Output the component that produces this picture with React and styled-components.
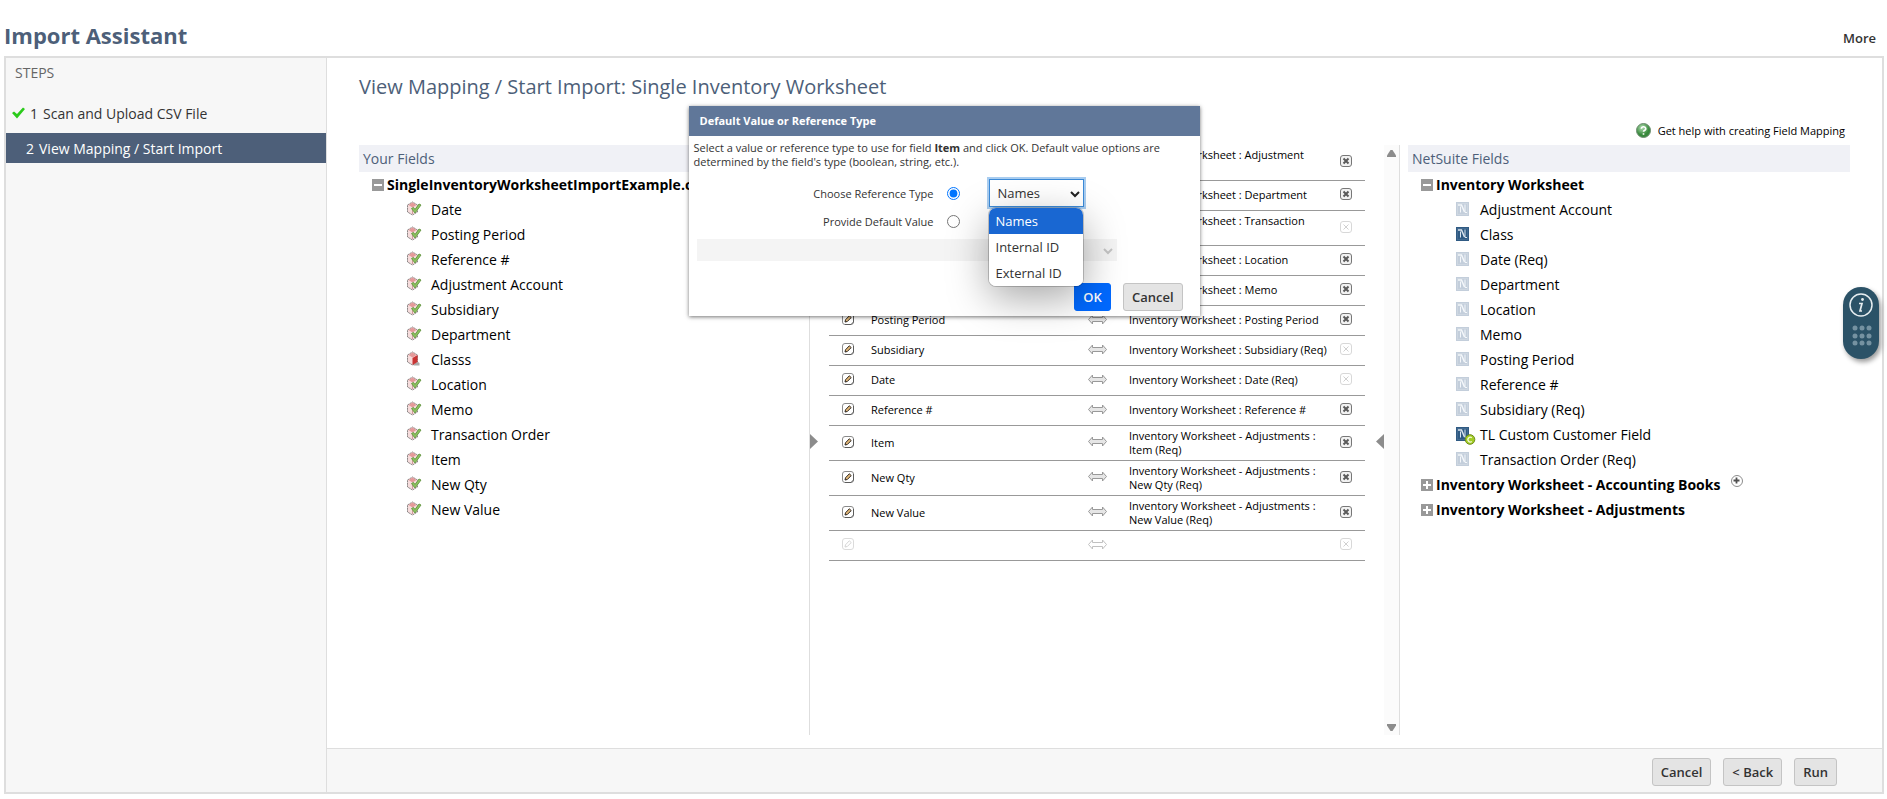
import React, { useState, useId } from "react";
import styled, { createGlobalStyle, css } from "styled-components";

const slate = "#4d5f79";
const rule = "#dedede";

const GlobalStyle = createGlobalStyle`
  * { box-sizing: border-box; }
  body {
    margin: 0;
    background: #fff;
    color: #000;
    font-family: "Open Sans", "Noto Sans", sans-serif;
    font-size: 14px;
  }
  button, select, input { font-family: inherit; }
  ul, ol { list-style: none; margin: 0; padding: 0; }
  svg { display: block; }
`;

const Page = styled.div`
  position: relative;
  min-height: 100vh;
  display: flex;
  flex-direction: column;
  padding: 16px 3px 5px 4px;
`;

const TitleBar = styled.header`
  display: flex;
  justify-content: space-between;
  align-items: flex-start;
  height: 40px;
  padding-right: 8px;
`;

const PageTitle = styled.h1`
  margin: 0;
  font-size: 22px;
  line-height: 38px;
  font-weight: 700;
  color: ${slate};
`;

const MoreLink = styled.a`
  font-size: 13px;
  line-height: 44px;
  font-weight: 600;
  color: #333;
  text-decoration: none;
`;

const Frame = styled.div`
  flex: 1;
  display: flex;
  border: 2px solid ${rule};
`;

const Sidebar = styled.nav`
  flex: 0 0 321px;
  background: #f7f7f7;
  border-right: 1px solid ${rule};
`;

const StepsLabel = styled.h2`
  margin: 0;
  padding: 0 9px;
  font-size: 14px;
  line-height: 30px;
  font-weight: 400;
  color: #666;
`;

const Step = styled.li`
  display: flex;
  align-items: center;
  gap: 5px;
  height: 30px;
  padding-left: ${(p) => (p.$active ? 20 : 6)}px;
  color: ${(p) => (p.$active ? "#fff" : "#333")};
  background: ${(p) => (p.$active ? slate : "transparent")};
`;

const StepList = styled.ol`
  display: grid;
  gap: 5px;
  padding-top: 10px;
`;

const StepNumber = styled.span`
  width: 8px;
`;

const Main = styled.main`
  flex: 1;
  min-width: 0;
  display: flex;
  flex-direction: column;
`;

const Content = styled.section`
  flex: 1;
  display: flex;
  flex-direction: column;
  padding: 12px 32px 13px;
`;

const Heading = styled.h2`
  margin: 0;
  font-size: 20px;
  line-height: 34px;
  font-weight: 400;
  color: ${slate};
`;

const HelpLink = styled.a`
  align-self: flex-end;
  display: flex;
  align-items: center;
  gap: 7px;
  margin: 18px 5px 6px 0;
  font-size: 11px;
  line-height: 17px;
  color: #000;
  text-decoration: none;
`;

const Columns = styled.div`
  flex: 1;
  display: grid;
  grid-template-columns: 451fr 574fr 16px 8px 442fr;
`;

const TreePane = styled.div`
  border-right: ${(p) => (p.$divided ? `1px solid ${rule}` : "0")};
`;

const PaneHeader = styled.h3`
  margin: 0;
  padding: 0 4px;
  font-size: 14px;
  line-height: 27px;
  font-weight: 400;
  color: ${slate};
  background: #f0f1f6;
`;

const Group = styled.li`
  padding-left: 13px;
`;

const GroupLabel = styled.div`
  display: flex;
  align-items: center;
  gap: 3px;
  height: 25px;
  font-weight: 700;
  white-space: nowrap;
`;

const Toggle = styled.button`
  display: block;
  width: 12px;
  height: 12px;
  padding: 0;
  border: 0;
  background: none;
`;

const AddLine = styled(Toggle)`
  margin: 0 0 7px 8px;
`;

const Field = styled.li`
  display: flex;
  align-items: center;
  gap: 8px;
  height: 25px;
  padding-left: 35px;
`;

const FieldIcon = styled.span`
  display: block;
  width: 16px;
  height: 16px;
  margin-bottom: 2px;
`;

const MappingPane = styled.div`
  display: flex;
  align-items: flex-start;
`;

const Collapser = styled.button`
  align-self: center;
  flex: 0 0 8px;
  margin-top: 3px;
  padding: 0;
  border: 0;
  background: none;
`;

const MappingTable = styled.table`
  flex: 1;
  margin: 0 11px;
  border-collapse: collapse;
  table-layout: fixed;
  font-size: 11px;
  line-height: 14px;
`;

const Col = styled.col`
  width: ${(p) => p.$w};
`;

const MapRow = styled.tr`
  height: ${(p) => (p.$tall ? 35 : 30)}px;
  border-bottom: 1px solid #999;
`;

const Cell = styled.td`
  padding: 0;
  vertical-align: middle;
  white-space: nowrap;
`;

const IconButton = styled.button`
  display: block;
  width: 12px;
  height: 12px;
  margin: 0 13px 2px;
  padding: 0;
  border: 0;
  background: none;
`;

const ArrowBox = styled.span`
  display: block;
  margin-bottom: 2px;
`;

const ScrollTrack = styled.div`
  display: flex;
  flex-direction: column;
  justify-content: space-between;
  align-items: center;
  padding: 5px 0 4px;
  background: #fbfbfb;
  border-right: 1px solid ${rule};
`;

const Footer = styled.footer`
  display: flex;
  justify-content: flex-end;
  align-items: center;
  gap: 12px;
  height: 44px;
  padding: 3px 45px 0 0;
  background: #f7f7f7;
  border-top: 1px solid ${rule};
`;

const Button = styled.button`
  height: 28px;
  padding: 0 8px;
  font-size: 13px;
  line-height: 18px;
  font-weight: 600;
  border-radius: 3px;
  white-space: nowrap;
  ${(p) =>
    p.$primary
      ? css`
          color: #fff;
          background: #0069ff;
          border: 1px solid #0069ff;
        `
      : css`
          color: #333;
          background: #e4e4e4;
          border: 1px solid #c4c4c4;
        `}
`;

const HelpPill = styled.aside`
  position: absolute;
  top: 287px;
  right: 8px;
  width: 36px;
  height: 72px;
  border-radius: 18px;
  background: #2b5267;
  box-shadow: 2px 3px 5px rgba(0, 0, 0, 0.4);
`;

const Dialog = styled.form`
  position: absolute;
  top: 106px;
  left: 50%;
  margin-left: -255px;
  width: 511px;
  background: #fff;
  box-shadow: 0 1px 4px rgba(0, 0, 0, 0.55);
`;

const DialogTitle = styled.h2`
  margin: 0;
  padding: 0 11px;
  font-size: 11px;
  line-height: 30px;
  font-weight: 700;
  color: #fff;
  background: #607799;
`;

const DialogBody = styled.div`
  padding: 5px 17px 5px 8px;
  font-size: 11px;
  color: #333;
`;

const Intro = styled.p`
  margin: 0 0 0 -3px;
  line-height: 14px;
`;

const Choice = styled.div`
  position: relative;
  display: grid;
  grid-template-columns: 237px 13px 95px;
  align-items: center;
  gap: 0 13px;
  height: 28px;
  margin-top: ${(p) => (p.$first ? 10 : 0)}px;
`;

const ChoiceLabel = styled.label`
  text-align: right;
`;

const Radio = styled.input`
  width: 13px;
  height: 13px;
  margin: 0;
  accent-color: #0075ff;
`;

const selectBox = css`
  appearance: none;
  font-size: 13px;
  border-radius: 0;
  background-repeat: no-repeat;
`;

const SelectWrap = styled.span`
  position: relative;
  display: block;
  width: ${(p) => p.$w}px;
  margin-top: ${(p) => p.$drop || 0}px;
  margin-left: ${(p) => p.$inset || 0}px;
`;

const TypeSelect = styled.select`
  ${selectBox}
  display: block;
  width: 100%;
  height: 28px;
  padding: 0 8px;
  color: #333;
  background: #fff;
  border: 1px solid #3b8ad8;
  outline: 2px solid #a9cdf0;
`;

const ValueSelect = styled.select`
  ${selectBox}
  display: block;
  width: 100%;
  height: 22px;
  border: 0;
  background: #f0f0f0;
`;

const Chevron = styled.svg`
  position: absolute;
  top: 50%;
  right: ${(p) => p.$right}px;
  margin-top: -2px;
  pointer-events: none;
`;

const Options = styled.ul`
  position: absolute;
  z-index: 1;
  top: 29px;
  left: 0;
  width: 94px;
  overflow: hidden;
  border-radius: 7px;
  background: #fff;
  font-size: 13px;
  box-shadow: 0 0 0 1px rgba(0, 0, 0, 0.2), 0 12px 40px rgba(0, 0, 0, 0.35);
`;

const Option = styled.li`
  padding: 0 7px;
  line-height: 26px;
  color: ${(p) => (p.$selected ? "#fff" : "#333")};
  background: ${(p) => (p.$selected ? "#1967d2" : "#fff")};
`;

const DialogActions = styled.div`
  display: flex;
  justify-content: flex-end;
  gap: 12px;
  margin-top: 22px;
`;

const CheckMark = () => (
  <svg width="13" height="12" viewBox="0 0 13 12" aria-hidden="true">
    <path d="M0 6l2-1.500 3 2.500L11 0.500l2 1.500-8 9.500z" fill="#2bcb1b" />
  </svg>
);

const ToggleGlyph = ({ open }) => (
  <svg width="12" height="12" viewBox="0 0 12 12" shapeRendering="crispEdges">
    <rect width="12" height="12" rx="1" fill="#999" />
    <rect x="2" y="5" width="8" height="2" fill="#fff" />
    {!open && <rect x="5" y="2" width="2" height="8" fill="#fff" />}
  </svg>
);

const CsvGlyph = ({ mapped }) => (
  <svg width="16" height="16" viewBox="0 0 16 16" aria-hidden="true">
    {!mapped && <path d="M6 14l5-3 1.500 1v2.500H7z" fill="#aaa" />}
    <path d="M0.500 4L5.500 1 10.500 4V11L5.500 14 0.500 11z" fill="#f6dcdc" stroke="#8b8686" strokeDasharray="2 0.500" />
    <path d="M1.500 4L5.500 1.500 9.500 4 5.500 6.500z" fill="#e59a9a" />
    {mapped ? (
      <>
        <path d="M5.500 7V13" stroke="#cf9a9a" />
        <path d="M4.500 7.500l2-1 1.500 2L12 3l2 1-6 8z" fill="#8cc45c" stroke="#6b9b4b" strokeLinejoin="round" />
      </>
    ) : (
      <path d="M5.500 7L10.500 4V11L5.500 14z" fill="#c93333" />
    )}
  </svg>
);

const NsGlyph = ({ kind }) => {
  const muted = kind === "used";
  const ink = muted ? "#f4f7fa" : "#dbe5ee";
  return (
    <svg width="20" height="19" viewBox="0 0 20 19" aria-hidden="true">
      <rect y="1" width="13" height="14" fill={muted ? "#c3cedb" : "#2f5a83"} />
      <rect x="1.500" y="2.500" width="10" height="11" fill="none" stroke={muted ? "#ced7e1" : "#426a90"} />
      <path d="M2 4H5.500L8.500 11" fill="none" stroke={ink} strokeWidth="1.500" />
      <path d="M4.500 5.500V11.500M9 3.500V11.500H11" fill="none" stroke={ink} />
      {kind === "custom" && (
        <>
          <circle cx="14" cy="13.500" r="4.800" fill="#a3cc25" stroke="#6e8d1b" />
          <path d="M15.800 11.700a2.400 2.400 0 1 0 0 3.800" fill="none" stroke="#f4f9dc" strokeWidth="1.300" />
        </>
      )}
    </svg>
  );
};

const AddGlyph = () => (
  <svg width="12" height="12" viewBox="0 0 12 12">
    <circle cx="6" cy="6" r="5.500" fill="#fff" stroke="#8c8c8c" />
    <path d="M5.500 2.500V8.500M2.500 5.500H8.500" stroke="#505050" strokeWidth="1.800" />
  </svg>
);

const EditGlyph = ({ off }) => (
  <svg width="12" height="12" viewBox="0 0 12 12" opacity={off ? 0.3 : 1}>
    <rect x="0.500" y="0.500" width="11" height="11" rx="2.500" fill="#fff" stroke="#8a8a8a" />
    {!off && <path d="M3 11.500H9L11.500 9V3" fill="none" stroke="#5c5c5c" />}
    <path
      d="M3 9L3.500 6.800 7.300 2.800 9.200 4.600 5.300 8.500z"
      fill={off ? "#fff" : "#e3b878"}
      stroke={off ? "#777" : "#2d2722"}
    />
  </svg>
);

const RemoveGlyph = ({ off }) => (
  <svg width="12" height="12" viewBox="0 0 12 12" opacity={off ? 0.28 : 1}>
    <rect x="0.500" y="0.500" width="11" height="11" rx="2.500" fill={off ? "#fff" : "#f2f2f2"} stroke="#777" />
    <path d="M3.500 3.500L8.500 8.500M8.500 3.500L3.500 8.500" stroke="#5a5a5a" strokeWidth={off ? 1 : 2} />
  </svg>
);

const MapArrow = ({ off }) => (
  <svg width="19" height="11" viewBox="0 0 19 11" opacity={off ? 0.6 : 1} aria-hidden="true">
    <path
      d="M0.500 5.500L4.500 1V3.500H14.500V1L18.500 5.500 14.500 10V7.500H4.500V10z"
      fill={off ? "#fff" : "#e6e6e6"}
      stroke="#999"
    />
  </svg>
);

const HelpGlyph = () => (
  <svg width="15" height="15" viewBox="0 0 15 15" aria-hidden="true">
    <defs>
      <radialGradient id="help-green" cx="0.400" cy="0.300">
        <stop offset="0" stopColor="#b3e0b4" />
        <stop offset="1" stopColor="#38893c" />
      </radialGradient>
    </defs>
    <circle cx="7.500" cy="7.500" r="7" fill="url(#help-green)" stroke="#6e8d70" />
    <path d="M5.300 5.800a2.200 2 0 1 1 3.200 1.700q-1 .5-1 1.300M7.500 10.200v1.600" fill="none" stroke="#fff" strokeWidth="1.600" />
  </svg>
);

const Arrow = ({ d, w, h, label }) => (
  <svg width={w} height={h} viewBox={`0 0 ${w} ${h}`} role="img" aria-label={label}>
    <path d={d} fill="#8c8c8c" />
  </svg>
);

const csvFields = [
  "Date", "Posting Period", "Reference #", "Adjustment Account", "Subsidiary",
  "Department", "Classs", "Location", "Memo", "Transaction Order", "Item",
  "New Qty", "New Value",
];

const nsFields = [
  ["Adjustment Account", "used"], ["Class", "free"], ["Date (Req)", "used"],
  ["Department", "used"], ["Location", "used"], ["Memo", "used"],
  ["Posting Period", "used"], ["Reference #", "used"], ["Subsidiary (Req)", "used"],
  ["TL Custom Customer Field", "custom"], ["Transaction Order (Req)", "used"],
];

const mappings = [
  { from: "Adjustment Account", to: ["Inventory Worksheet : Adjustment", "Account"] },
  { from: "Department", to: ["Inventory Worksheet : Department"] },
  { from: "Transaction Order", to: ["Inventory Worksheet : Transaction", "Order (Req)"], locked: true },
  { from: "Location", to: ["Inventory Worksheet : Location"] },
  { from: "Memo", to: ["Inventory Worksheet : Memo"] },
  { from: "Posting Period", to: ["Inventory Worksheet : Posting Period"] },
  { from: "Subsidiary", to: ["Inventory Worksheet : Subsidiary (Req)"], locked: true },
  { from: "Date", to: ["Inventory Worksheet : Date (Req)"], locked: true },
  { from: "Reference #", to: ["Inventory Worksheet : Reference #"] },
  { from: "Item", to: ["Inventory Worksheet - Adjustments :", "Item (Req)"] },
  { from: "New Qty", to: ["Inventory Worksheet - Adjustments :", "New Qty (Req)"] },
  { from: "New Value", to: ["Inventory Worksheet - Adjustments :", "New Value (Req)"] },
  { from: "", to: [""], locked: true, empty: true },
];

const referenceTypes = ["Names", "Internal ID", "External ID"];

function TreeGroup({ label, open, addable, children }) {
  return (
    <Group>
      <GroupLabel>
        <Toggle type="button" aria-label={`Toggle ${label}`}>
          <ToggleGlyph open={open} />
        </Toggle>
        {label}
        {addable && (
          <AddLine type="button" aria-label={`Add ${label}`}>
            <AddGlyph />
          </AddLine>
        )}
      </GroupLabel>
      {children && <ul>{children}</ul>}
    </Group>
  );
}

function TreeField({ icon, label }) {
  return (
    <Field>
      <FieldIcon>{icon}</FieldIcon>
      {label}
    </Field>
  );
}

function Mappings() {
  return (
    <MappingTable>
      <colgroup>
        <Col $w="42px" />
        <Col />
        <Col $w="41px" />
        <Col $w="198px" />
        <Col $w="38px" />
      </colgroup>
      <tbody>
        {mappings.map((m) => (
          <MapRow key={m.from} $tall={m.to.length > 1}>
            <Cell>
              <IconButton type="button" aria-label={`Edit ${m.from}`}>
                <EditGlyph off={m.empty} />
              </IconButton>
            </Cell>
            <Cell>{m.from}</Cell>
            <Cell>
              <ArrowBox>
                <MapArrow off={m.empty} />
              </ArrowBox>
            </Cell>
            <Cell>
              {m.to.map((line) => (
                <div key={line}>{line}</div>
              ))}
            </Cell>
            <Cell>
              <IconButton type="button" aria-label={`Remove ${m.from}`} disabled={m.locked}>
                <RemoveGlyph off={m.locked} />
              </IconButton>
            </Cell>
          </MapRow>
        ))}
      </tbody>
    </MappingTable>
  );
}

function ReferenceDialog() {
  const [mode, setMode] = useState("reference");
  const [type, setType] = useState("Names");
  const id = useId();
  return (
    <Dialog role="dialog" aria-labelledby={`${id}-title`}>
      <DialogTitle id={`${id}-title`}>Default Value or Reference Type</DialogTitle>
      <DialogBody>
        <Intro>
          Select a value or reference type to use for field <b>Item</b> and click OK. Default value options are
          determined by the field's type (boolean, string, etc.).
        </Intro>
        <Choice $first>
          <ChoiceLabel htmlFor={`${id}-ref`}>Choose Reference Type</ChoiceLabel>
          <Radio
            type="radio"
            name="mode"
            id={`${id}-ref`}
            checked={mode === "reference"}
            onChange={() => setMode("reference")}
          />
          <SelectWrap $w={95} $inset={16}>
            <TypeSelect aria-label="Reference type" value={type} onChange={(e) => setType(e.target.value)}>
              {referenceTypes.map((t) => (
                <option key={t}>{t}</option>
              ))}
            </TypeSelect>
            <Chevron $right={4} width="10" height="7" viewBox="0 0 10 7">
              <path d="M1 1l4 4 4-4" fill="none" stroke="#222" strokeWidth="2" />
            </Chevron>
            <Options role="listbox" aria-label="Reference types">
              {referenceTypes.map((t) => (
                <Option key={t} role="option" aria-selected={t === type} $selected={t === type}>
                  {t}
                </Option>
              ))}
            </Options>
          </SelectWrap>
        </Choice>
        <Choice>
          <ChoiceLabel htmlFor={`${id}-def`}>Provide Default Value</ChoiceLabel>
          <Radio
            type="radio"
            name="mode"
            id={`${id}-def`}
            checked={mode === "default"}
            onChange={() => setMode("default")}
          />
        </Choice>
        <SelectWrap $w={420} $drop={4}>
          <ValueSelect aria-label="Default value" disabled />
          <Chevron $right={4} width="10" height="7" viewBox="0 0 10 7">
            <path d="M1 1l4 4 4-4" fill="none" stroke="#c4c4c4" strokeWidth="2" />
          </Chevron>
        </SelectWrap>
        <DialogActions>
          <Button type="button" $primary>OK</Button>
          <Button type="button">Cancel</Button>
        </DialogActions>
      </DialogBody>
    </Dialog>
  );
}

export default function App() {
  return (
    <Page>
      <GlobalStyle />
      <TitleBar>
        <PageTitle>Import Assistant</PageTitle>
        <MoreLink href="#more">More</MoreLink>
      </TitleBar>
      <Frame>
        <Sidebar aria-label="Steps">
          <StepsLabel>STEPS</StepsLabel>
          <StepList>
            <Step>
              <CheckMark />
              <StepNumber>1</StepNumber>
              <span>Scan and Upload CSV File</span>
            </Step>
            <Step $active aria-current="step">
              <StepNumber>2</StepNumber>
              <span>View Mapping / Start Import</span>
            </Step>
          </StepList>
        </Sidebar>
        <Main>
          <Content>
            <Heading>View Mapping / Start Import: Single Inventory Worksheet</Heading>
            <HelpLink href="#help">
              <HelpGlyph />
              Get help with creating Field Mapping
            </HelpLink>
            <Columns>
              <TreePane $divided>
                <PaneHeader>Your Fields</PaneHeader>
                <ul>
                  <TreeGroup label="SingleInventoryWorksheetImportExample.csv" open>
                    {csvFields.map((f) => (
                      <TreeField key={f} label={f} icon={<CsvGlyph mapped={f !== "Classs"} />} />
                    ))}
                  </TreeGroup>
                </ul>
              </TreePane>
              <MappingPane>
                <Collapser type="button" aria-label="Collapse your fields">
                  <Arrow d="M0 0L8 7.500 0 15z" w={8} h={15} label="Collapse" />
                </Collapser>
                <Mappings />
                <Collapser type="button" aria-label="Collapse NetSuite fields">
                  <Arrow d="M8 0L0 7.500 8 15z" w={8} h={15} label="Collapse" />
                </Collapser>
              </MappingPane>
              <ScrollTrack>
                <Arrow d="M3.500 0h2L9 5.500v1.500H0V5.500z" w={9} h={7} label="Scroll up" />
                <Arrow d="M0 0h9v1.500L5.500 7h-2L0 1.500z" w={9} h={7} label="Scroll down" />
              </ScrollTrack>
              <span />
              <TreePane>
                <PaneHeader>NetSuite Fields</PaneHeader>
                <ul>
                  <TreeGroup label="Inventory Worksheet" open>
                    {nsFields.map(([f, kind]) => (
                      <TreeField key={f} label={f} icon={<NsGlyph kind={kind} />} />
                    ))}
                  </TreeGroup>
                  <TreeGroup label="Inventory Worksheet - Accounting Books" addable />
                  <TreeGroup label="Inventory Worksheet - Adjustments" />
                </ul>
              </TreePane>
            </Columns>
          </Content>
          <Footer>
            <Button type="button">Cancel</Button>
            <Button type="button">&lt; Back</Button>
            <Button type="button">Run</Button>
          </Footer>
        </Main>
      </Frame>
      <ReferenceDialog />
      <HelpPill aria-label="Help">
        <svg width="36" height="72" viewBox="0 0 36 72" aria-hidden="true">
          <circle cx="18" cy="18" r="11" fill="none" stroke="#e6edf0" strokeWidth="1.500" />
          <circle cx="19.500" cy="12.500" r="1.400" fill="#e6edf0" />
          <path d="M16 16.500h3l-2 7.500h2" fill="none" stroke="#e6edf0" strokeWidth="1.700" />
          {[41, 49, 56].map((y) => [12, 19, 26].map((x) => <circle key={`${x}-${y}`} cx={x} cy={y} r="2.500" fill="#7592a1" />))}
        </svg>
      </HelpPill>
    </Page>
  );
}
